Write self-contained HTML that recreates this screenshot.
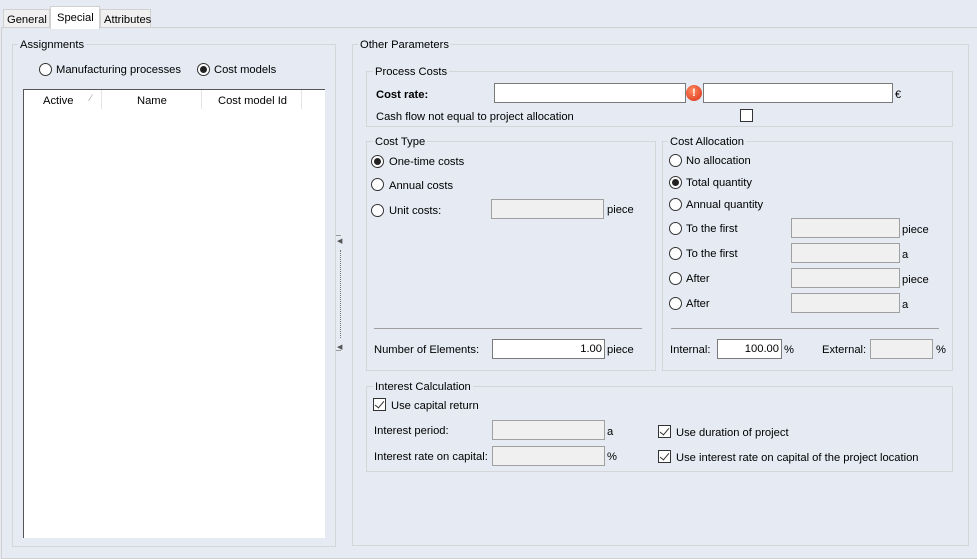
<!DOCTYPE html>
<html><head><meta charset="utf-8"><style>
*{box-sizing:border-box}
body{margin:0;width:977px;height:559px;background:#e5eaf3;font-family:"Liberation Sans",sans-serif;font-size:11.2px;color:#000;position:relative;overflow:hidden}
div,span{position:absolute}
.t{white-space:nowrap;line-height:14px;margin-top:1px}
.g{border:1px solid #d4d6da}
.gl{background:#e5eaf3;padding:0 2px;white-space:nowrap;line-height:14px;margin-top:1px}
.in{background:#fff;border:1px solid #7a7a7a;height:20px}
.dis{background:#f0f0f0;border:1px solid #a0a0a0;height:20px}
.r{width:13px;height:13px;border:1px solid #333;border-radius:50%;background:#fff}
.r.on::after{content:"";position:absolute;left:2px;top:2px;width:7px;height:7px;border-radius:50%;background:#222}
.c{width:13px;height:13px;border:1px solid #333;background:#fff}
.c.on::after{content:"";position:absolute;left:3px;top:0px;width:4px;height:8px;border:solid #333;border-width:0 1px 1px 0;transform:rotate(40deg)}
.sep{height:1px;background:#a0a0a0}
.num{text-align:right;padding-right:2px;line-height:18px}
</style></head><body>
<div style="left:1px;top:27px;width:976px;height:532px;border:1px solid #d0d0d0;border-right:none;background:#e5eaf3"></div>
<div style="left:3px;top:9px;width:47px;height:19px;border:1px solid #d0d0d0;background:#f0f0f0"></div>
<div class="t" style="left:7px;top:12px">General</div>
<div style="left:50px;top:6px;width:50px;height:23px;border:1px solid #d0d0d0;border-bottom:none;background:#fff"></div>
<div class="t" style="left:57px;top:10px">Special</div>
<div style="left:100px;top:9px;width:51px;height:19px;border:1px solid #d0d0d0;background:#f0f0f0"></div>
<div class="t" style="left:104px;top:12px">Attributes</div>

<div class="g" style="left:12px;top:44px;width:324px;height:503px"></div>
<div class="gl" style="left:18px;top:37px">Assignments</div>
<div class="r" style="left:39px;top:63px"></div><div class="t" style="left:56px;top:62px">Manufacturing processes</div>
<div class="r on" style="left:197px;top:63px"></div><div class="t" style="left:214px;top:62px">Cost models</div>
<div style="left:23px;top:89px;width:302px;height:449px;background:#fff;border-left:1px solid #555;border-top:1px solid #555"></div>
<div class="t" style="left:43px;top:93px">Active</div>
<div class="t" style="left:90px;top:90px;color:#999;font-size:9px">⁄</div>
<div style="left:101px;top:90px;width:1px;height:19px;background:#e5e5e5"></div>
<div class="t" style="left:137px;top:93px">Name</div>
<div style="left:201px;top:90px;width:1px;height:19px;background:#e5e5e5"></div>
<div class="t" style="left:218px;top:93px">Cost model Id</div>
<div style="left:301px;top:90px;width:1px;height:19px;background:#e5e5e5"></div>

<div style="left:336px;top:235px;width:5px;height:1px;background:#999"></div>
<div class="t" style="left:337px;top:234px;font-size:7px;color:#555">◀</div>
<div style="left:340px;top:250px;width:1px;height:88px;border-left:1px dotted #777"></div>
<div class="t" style="left:337px;top:340px;font-size:7px;color:#555">◀</div>
<div style="left:336px;top:350px;width:5px;height:1px;background:#999"></div>

<div class="g" style="left:352px;top:44px;width:617px;height:502px"></div>
<div class="gl" style="left:358px;top:37px">Other Parameters</div>

<div class="g" style="left:366px;top:71px;width:587px;height:56px"></div>
<div class="gl" style="left:373px;top:64px">Process Costs</div>
<div class="t" style="left:376px;top:87px;font-weight:bold">Cost rate:</div>
<div class="in" style="left:494px;top:83px;width:192px"></div>
<div style="left:686px;top:85px;width:16px;height:16px;border-radius:50%;background:radial-gradient(circle at 40% 35%,#ff8a5c,#d8301a);color:#fff;font-weight:bold;font-size:11px;text-align:center;line-height:16px">!</div>
<div class="in" style="left:703px;top:83px;width:190px"></div>
<div class="t" style="left:895px;top:87px;font-size:11px">€</div>
<div class="t" style="left:376px;top:109px">Cash flow not equal to project allocation</div>
<div class="c" style="left:740px;top:109px"></div>

<div class="g" style="left:366px;top:141px;width:290px;height:230px"></div>
<div class="gl" style="left:373px;top:134px">Cost Type</div>
<div class="r on" style="left:371px;top:155px"></div><div class="t" style="left:389px;top:154px">One-time costs</div>
<div class="r" style="left:371px;top:178px"></div><div class="t" style="left:389px;top:178px">Annual costs</div>
<div class="r" style="left:371px;top:204px"></div><div class="t" style="left:389px;top:203px">Unit costs:</div>
<div class="dis" style="left:491px;top:199px;width:113px"></div>
<div class="t" style="left:607px;top:202px">piece</div>
<div class="sep" style="left:374px;top:328px;width:268px"></div>
<div class="t" style="left:374px;top:342px">Number of Elements:</div>
<div class="in num" style="left:492px;top:339px;width:113px">1.00</div>
<div class="t" style="left:607px;top:342px">piece</div>

<div class="g" style="left:662px;top:141px;width:291px;height:230px"></div>
<div class="gl" style="left:668px;top:134px">Cost Allocation</div>
<div class="r" style="left:669px;top:154px"></div><div class="t" style="left:686px;top:153px">No allocation</div>
<div class="r on" style="left:669px;top:176px"></div><div class="t" style="left:686px;top:175px">Total quantity</div>
<div class="r" style="left:669px;top:198px"></div><div class="t" style="left:686px;top:197px">Annual quantity</div>
<div class="r" style="left:669px;top:222px"></div><div class="t" style="left:686px;top:221px">To the first</div>
<div class="dis" style="left:791px;top:218px;width:109px"></div><div class="t" style="left:902px;top:222px">piece</div>
<div class="r" style="left:669px;top:247px"></div><div class="t" style="left:686px;top:246px">To the first</div>
<div class="dis" style="left:791px;top:243px;width:109px"></div><div class="t" style="left:902px;top:247px">a</div>
<div class="r" style="left:669px;top:272px"></div><div class="t" style="left:686px;top:271px">After</div>
<div class="dis" style="left:791px;top:268px;width:109px"></div><div class="t" style="left:902px;top:272px">piece</div>
<div class="r" style="left:669px;top:297px"></div><div class="t" style="left:686px;top:296px">After</div>
<div class="dis" style="left:791px;top:293px;width:109px"></div><div class="t" style="left:902px;top:297px">a</div>
<div class="sep" style="left:671px;top:328px;width:268px"></div>
<div class="t" style="left:670px;top:342px">Internal:</div>
<div class="in num" style="left:717px;top:339px;width:65px">100.00</div>
<div class="t" style="left:784px;top:342px">%</div>
<div class="t" style="left:822px;top:342px">External:</div>
<div class="dis" style="left:870px;top:339px;width:63px"></div>
<div class="t" style="left:936px;top:342px">%</div>

<div class="g" style="left:366px;top:386px;width:587px;height:86px"></div>
<div class="gl" style="left:373px;top:379px">Interest Calculation</div>
<div class="c on" style="left:373px;top:398px"></div><div class="t" style="left:391px;top:398px">Use capital return</div>
<div class="t" style="left:374px;top:423px">Interest period:</div>
<div class="dis" style="left:492px;top:420px;width:113px"></div><div class="t" style="left:607px;top:424px">a</div>
<div class="t" style="left:374px;top:449px">Interest rate on capital:</div>
<div class="dis" style="left:492px;top:446px;width:113px"></div><div class="t" style="left:607px;top:449px">%</div>
<div class="c on" style="left:658px;top:425px"></div><div class="t" style="left:676px;top:425px">Use duration of project</div>
<div class="c on" style="left:658px;top:450px"></div><div class="t" style="left:676px;top:450px">Use interest rate on capital of the project location</div>
</body></html>
